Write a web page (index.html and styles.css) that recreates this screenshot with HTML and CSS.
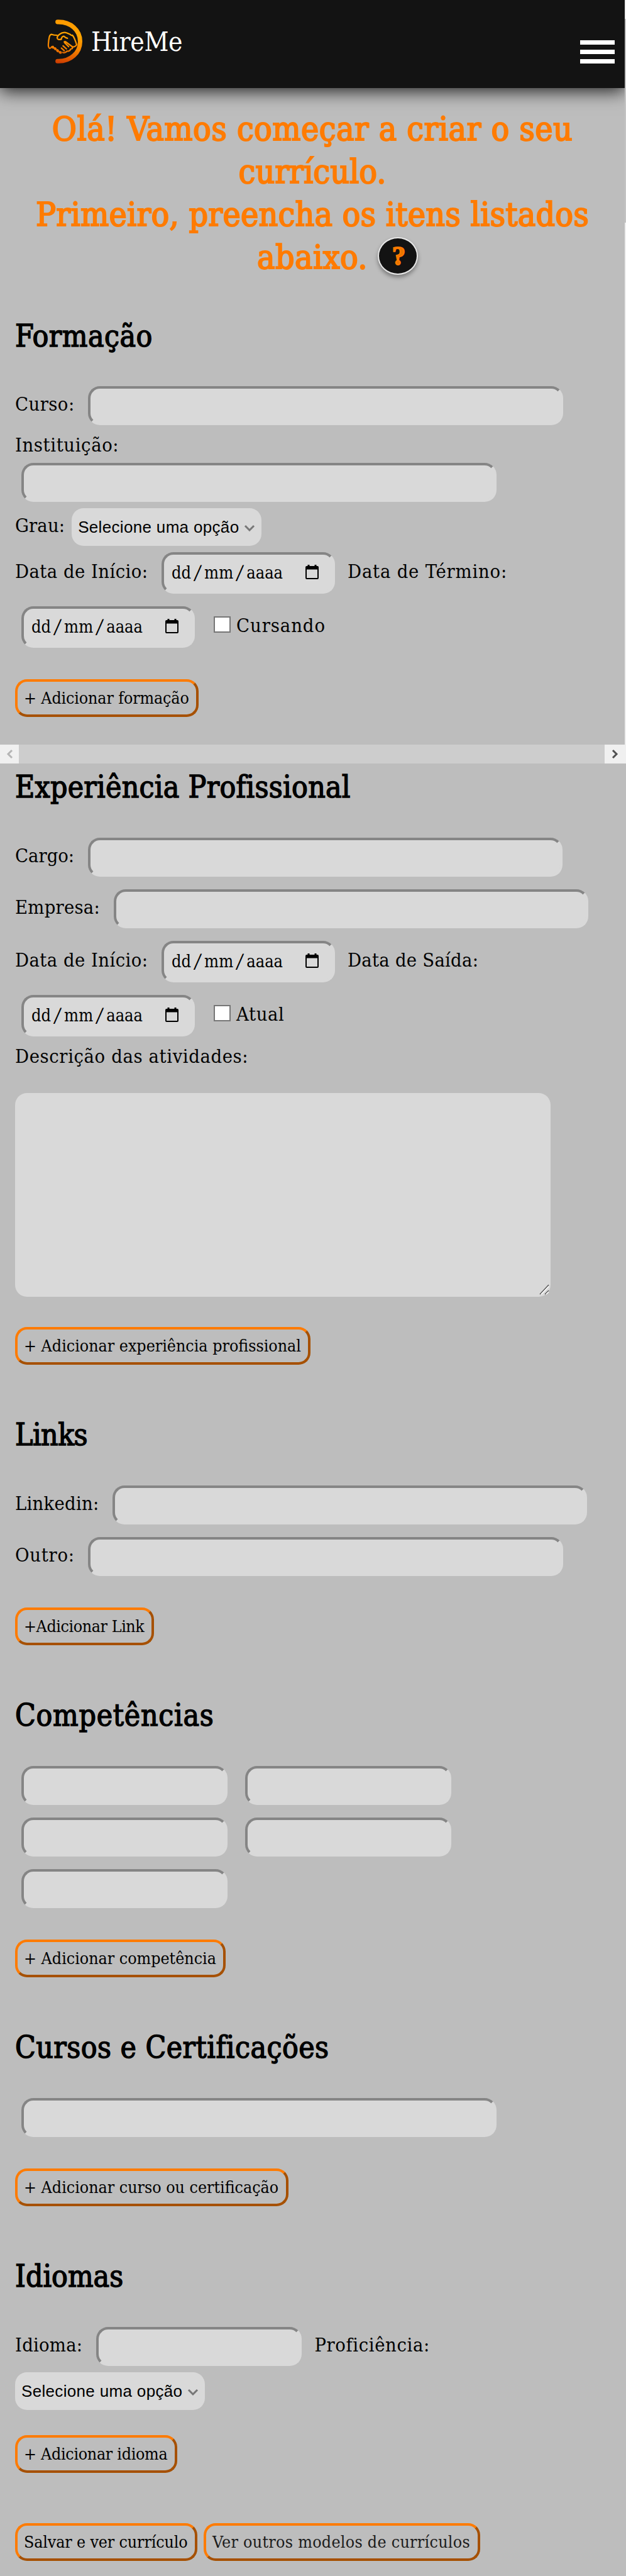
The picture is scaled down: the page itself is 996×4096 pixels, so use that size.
FILE: index.html
```
<!DOCTYPE html>
<html lang="pt-BR">
<head>
<meta charset="utf-8">
<title>HireMe</title>
<link rel="stylesheet" href="styles.css">
</head>
<body>
<svg class="defs" width="0" height="0">
  <symbol id="calendar" viewBox="0 0 21 23"><path d="M3.5 0h3v2h8V0h3v2H19q2 0 2 2v17q0 2-2 2H2q-2 0-2-2V4q0-2 2-2h1.500zM2 7.500V21h17V7.500z" fill="#000" fill-rule="evenodd"/></symbol>
  <symbol id="chevron" viewBox="0 0 18 11"><path d="M2 2l7 7 7-7" fill="none" stroke="#777" stroke-width="3"/></symbol>
</svg>
<div class="scroll-y"><div class="thumb"></div></div>
<header class="top">
  <svg class="logo" viewBox="0 0 225 270" fill="none" stroke-linecap="round" stroke-linejoin="round">
    <defs><linearGradient id="g" gradientUnits="userSpaceOnUse" x1="150" y1="20" x2="110" y2="245"><stop offset="0" stop-color="#ff9800"/><stop offset=".35" stop-color="#ffa500"/><stop offset=".65" stop-color="#f58200"/><stop offset="1" stop-color="#cc3b00"/></linearGradient></defs>
    <g stroke="url(#g)">
      <path stroke-width="22" d="M77 34C143 32 189 76 189 131S143 231 77 229"/>
      <g stroke-width="7">
        <path d="M74 100Q58 100 48 96Q39 96 36 108Q32 125 31 145Q30 160 37 165Q43 166 47 158L54 156"/>
        <path d="M95 120Q78 125 75 114Q74 105 86 96Q104 82 124 89L140 96Q147 103 151 100Q161 112 172 148Q162 160 150 158"/>
        <path d="M95 120Q98 106 108 105Q117 113 126 115"/>
        <path d="M112 136Q107 130 116 132L150 157Q154 168 143 168Q136 182 124 179Q115 190 103 186"/>
        <path d="M112 137L132 157M104 153L121 168M96 164L110 177"/>
      </g>
      <path stroke-width="13" d="M53 159l1 1M64 166l2 2M76 176l2 2M89 185l3 1"/>
    </g>
  </svg>
  <span class="brand">HireMe</span>
  <div class="menu"><i></i><i></i><i></i></div>
</header>
<main>
  <h1>Olá! Vamos começar a criar o seu<br><span class="h1-b">currículo.</span><br><span class="h1-c">Primeiro, preencha os itens listados</span><br><span class="last">abaixo.<b class="help">?</b></span></h1>

  <section>
    <h2 class="k4">Formação</h2>
    <div class="row"><label class="k4">Curso:</label><input class="field wide"></div>
    <div class="line inst k6">Instituição:</div>
    <div class="row"><input class="field wide first"></div>
    <div class="row sel"><label class="k1">Grau:</label><div class="select">Selecione uma opção<svg><use href="#chevron"/></svg></div></div>
    <div class="row date"><label class="k4">Data de Início:</label><div class="field day">dd<i>/</i>mm<i>/</i>aaaa<svg><use href="#calendar"/></svg></div><label class="after k8">Data de Término:</label></div>
    <div class="row date next"><div class="field day first">dd<i>/</i>mm<i>/</i>aaaa<svg><use href="#calendar"/></svg></div><span class="check"></span><label class="k9">Cursando</label></div>
    <button class="k-1">+ Adicionar formação</button>
  </section>

  <div class="scroll-x"><span><svg width="12" height="16"><path d="M10 2L4 8l6 6" fill="none" stroke="#b5b5b5" stroke-width="3"/></svg></span><span class="right"><svg width="12" height="16"><path d="M2 2l6 6-6 6" fill="none" stroke="#505050" stroke-width="3"/></svg></span></div>

  <section class="work">
    <h2 class="k2">Experiência Profissional</h2>
    <div class="row"><label class="k0">Cargo:</label><input class="field wide"></div>
    <div class="row next"><label class="k2">Empresa:</label><input class="field wide"></div>
    <div class="row date next"><label class="k4">Data de Início:</label><div class="field day">dd<i>/</i>mm<i>/</i>aaaa<svg><use href="#calendar"/></svg></div><label class="after k2">Data de Saída:</label></div>
    <div class="row date next"><div class="field day first">dd<i>/</i>mm<i>/</i>aaaa<svg><use href="#calendar"/></svg></div><span class="check"></span><label class="k6">Atual</label></div>
    <div class="line desc k6">Descrição das atividades:</div>
    <div class="area"><svg width="16" height="17"><path d="M1 16L15 1M9 16l6-6" stroke="#555" stroke-width="1.500"/><path d="M3 16L15 3.500M11 16l4-4" stroke="#fff" stroke-width="1.500"/></svg></div>
    <button>+ Adicionar experiência profissional</button>
  </section>

  <section>
    <h2 class="links">Links</h2>
    <div class="row"><label class="k2">Linkedin:</label><input class="field wide"></div>
    <div class="row next"><label class="k7">Outro:</label><input class="field wide"></div>
    <button class="k-4">+Adicionar Link</button>
  </section>

  <section>
    <h2 class="k7">Competências</h2>
    <div class="skills"><input class="field"><input class="field"><input class="field"><input class="field"><input class="field"></div>
    <button>+ Adicionar competência</button>
  </section>

  <section>
    <h2 class="k4">Cursos e Certificações</h2>
    <div class="row"><input class="field wide first"></div>
    <button>+ Adicionar curso ou certificação</button>
  </section>

  <section>
    <h2 class="k0">Idiomas</h2>
    <div class="row"><label class="k2">Idioma:</label><input class="field"><label class="after k6">Proficiência:</label></div>
    <div class="row sel"><div class="select">Selecione uma opção<svg><use href="#chevron"/></svg></div></div>
    <button class="lang k-2">+ Adicionar idioma</button>
    <div class="actions"><button class="k-1">Salvar e ver currículo</button><button class="other k3">Ver outros modelos de currículos</button></div>
  </section>
</main>
</body>
</html>
```
FILE: styles.css
```
* { box-sizing: border-box; }
html { background: #bdbdbd; }
body {
  margin: 0;
  width: 996px;
  height: 4096px;
  position: relative;
  overflow: hidden;
  background: #bdbdbd;
  color: #000;
  font: 30.6px/58.4px "DejaVu Serif Condensed", "DejaVu Serif", serif;
}
.defs { position: absolute; }
.scroll-y {
  position: absolute;
  right: 0;
  top: 0;
  width: 2px;
  height: 1184px;
  background: #efefef;
}
.thumb { margin-top: 30px; height: 324px; background: #c4c4c4; }

.top {
  display: flex;
  width: 994px;
  height: 140px;
  padding-left: 67px;
  background: #131313;
  box-shadow: 0 5px 26px rgba(0, 0, 0, .82);
}
.logo { width: 72px; height: 86.4px; margin-top: 24px; }
.brand {
  margin-left: 6px;
  color: #fff;
  font-size: 42.3px;
  line-height: 134.6px;
  letter-spacing: -.4px;
}
.menu {
  margin: 64px 16.500px 0 auto;
  width: 55px;
  display: flex;
  flex-direction: column;
  gap: 8.500px;
}
.menu i { height: 6.500px; background: #fff; }

h1 {
  margin: 31px 0 0;
  width: 994px;
  text-align: center;
  white-space: nowrap;
  color: #ff7b00;
  font-size: 53px;
  font-weight: 400;
  line-height: 68px;
  letter-spacing: .5px;
  -webkit-text-stroke: 2px #ff7b00;
}
.h1-b { letter-spacing: .1px; }
.h1-c { letter-spacing: .3px; }
.last { position: relative; }
.help {
  position: absolute;
  left: 192px;
  top: -1px;
  width: 64px;
  height: 60px;
  padding-left: 3px;
  border: 2px solid #e8e8e8;
  border-radius: 50%;
  background: #131313;
  box-shadow: 0 4px 6px rgba(0, 0, 0, .35);
  color: #ea7500;
  font: bold 43px/56px "Liberation Serif", serif;
  letter-spacing: 0;
}

section { margin-top: 82.500px; padding-left: 24px; }
h1 + section { margin-top: 61.500px; }
h2 {
  margin: 0 0 49.500px;
  font-size: 47.7px;
  font-weight: 400;
  line-height: 60px;
  -webkit-text-stroke: 1.400px #000;
}
h2.links { letter-spacing: -.56px; }
.k-4 { letter-spacing: -.41px; }
.k-2 { letter-spacing: -.29px; }
.k-1 { letter-spacing: -.13px; }
.k0 { letter-spacing: 0; }
.k1 { letter-spacing: .11px; }
.k2 { letter-spacing: .25px; }
.k3 { letter-spacing: .3px; }
.k4 { letter-spacing: .45px; }
.k6 { letter-spacing: .62px; }
.k7 { letter-spacing: .73px; }
.k8 { letter-spacing: .8px; }
.k9 { letter-spacing: .94px; }

.row { display: flex; white-space: nowrap; }
.next { margin-top: 20px; }
.line { line-height: 63px; white-space: nowrap; }
.inst { height: 59.700px; }
.desc { height: 90px; }
.field {
  flex: none;
  display: block;
  width: 327.500px;
  height: 62px;
  margin: 0 0 0 21.500px;
  padding: 0;
  outline: 0;
  border: 4px solid #d9d9d9;
  border-top-color: #858585;
  border-left-color: #858585;
  border-radius: 19px;
  background: #d9d9d9;
}
.wide { width: 755.500px; }
.first { margin-left: 10px; }
.after { margin-left: 20px; }
.sel { margin-top: 10px; line-height: 56px; }
.select {
  display: flex;
  width: 302px;
  height: 60px;
  padding-left: 10px;
  border-radius: 19px;
  background: #d9d9d9;
  font: 26px/60px "Liberation Sans", Arial, sans-serif;
  letter-spacing: .33px;
}
label + .select { margin-left: 11px; }
.select svg { width: 18px; height: 11px; margin: 26px 0 0 8px; }
.date { line-height: 62.4px; }
.sel + .date { margin-top: 10px; }
.day {
  display: flex;
  width: 276px;
  height: 66px;
  padding-left: 12px;
  font-size: 27px;
  line-height: 57.500px;
}
.day i {
  width: 21px;
  text-align: center;
  font-style: normal;
  font-size: 31px;
  transform: skewX(-9deg);
}
.day svg { width: 21px; height: 23px; margin: 16.500px 22px 0 auto; }
.check {
  width: 27px;
  height: 26px;
  margin: 16px 9px 0 30px;
  border: 2px solid #767676;
  background: #fff;
}

button {
  display: block;
  height: 60px;
  margin: 50px 0 0;
  padding: 0 11.500px 0 10px;
  border: 4px solid #a65000;
  border-top-color: #ff7b00;
  border-left-color: #ff7b00;
  border-radius: 19px;
  background: none;
  color: #000;
  font: 26.55px/52px "DejaVu Serif Condensed", "DejaVu Serif", serif;
  white-space: nowrap;
}
.scroll-x {
  display: flex;
  justify-content: space-between;
  height: 30px;
  margin-top: 44.500px;
  background: #cdcdcd;
}
.scroll-x span {
  display: flex;
  align-items: center;
  justify-content: center;
  width: 30px;
  background: #f0f0f0;
}
.scroll-x .right { width: 34px; }
.work { margin-top: 8px; }
.area {
  width: 852px;
  height: 324px;
  margin-bottom: 48px;
  padding: 304px 0 0 834px;
  border-radius: 19px;
  background: #d9d9d9;
  line-height: 0;
}
.area + button { margin-top: 0; }
.skills {
  display: grid;
  grid-template-columns: 327.500px 327.500px;
  gap: 20px 28.500px;
  padding-left: 10px;
}
.skills .field { margin: 0; }
.lang { margin-top: 40px; }
.actions { display: flex; gap: 10px; margin-top: 80px; }
.actions button { margin: 0; }
.other { color: #1c1c1c; }
```
